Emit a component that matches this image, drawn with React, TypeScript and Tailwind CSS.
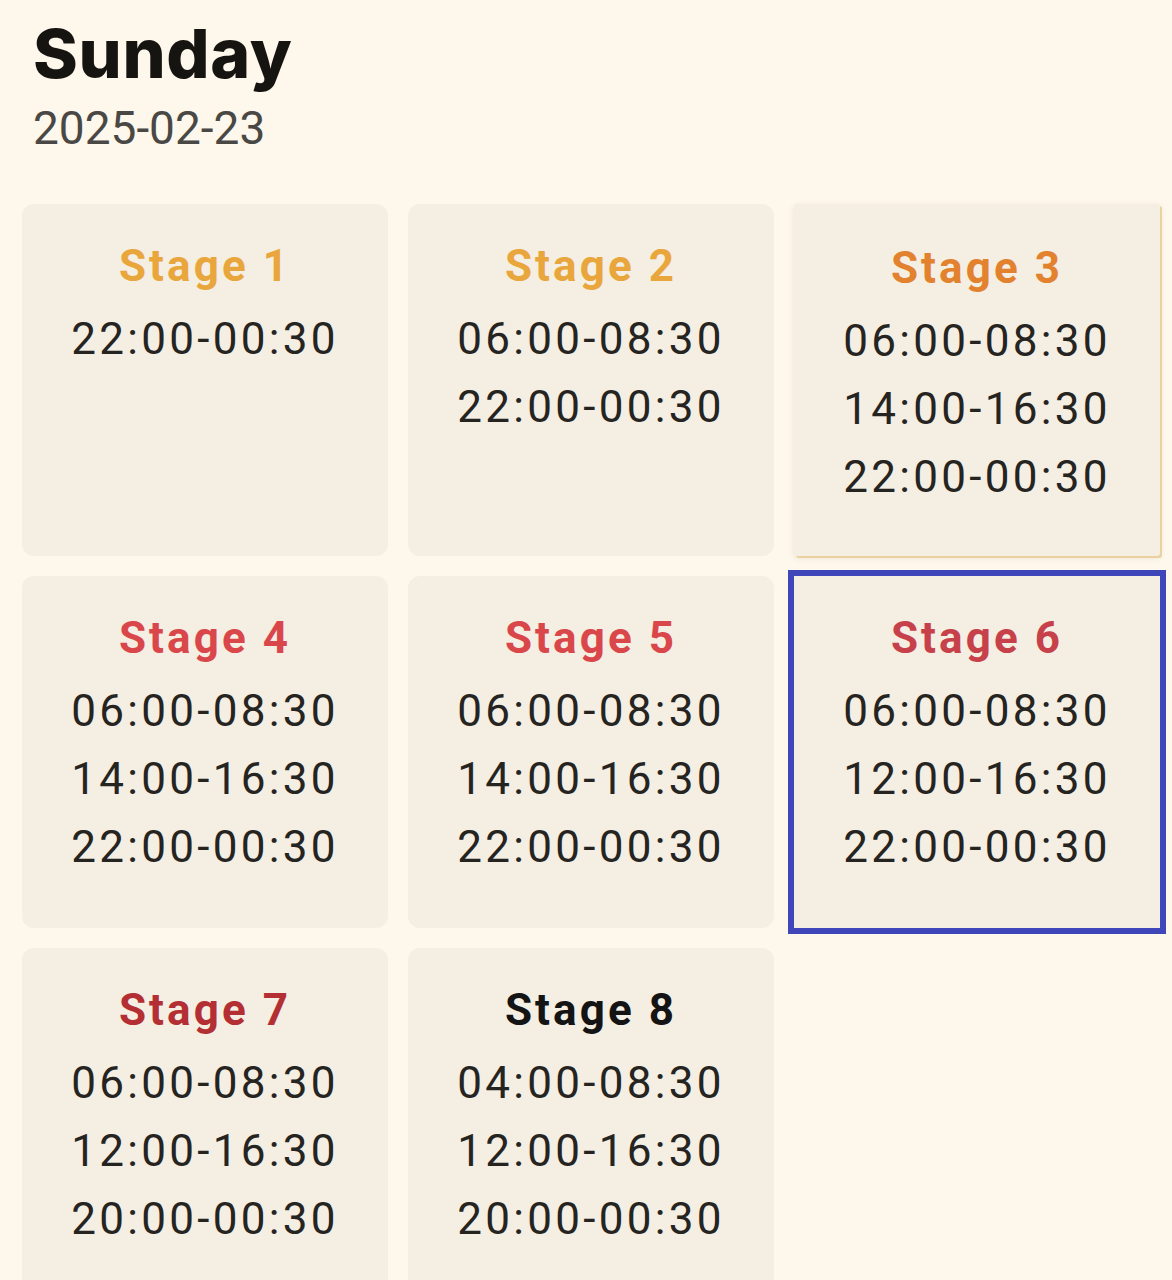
type Stage = { n: number; color: string; times: string[]; variant?: 'raised' | 'selected' };

const STAGES: Stage[] = [
  { n: 1, color: 'text-[#e9a63c]', times: ['22:00-00:30'] },
  { n: 2, color: 'text-[#e9a63c]', times: ['06:00-08:30', '22:00-00:30'] },
  { n: 3, color: 'text-[#e2822f]', times: ['06:00-08:30', '14:00-16:30', '22:00-00:30'], variant: 'raised' },
  { n: 4, color: 'text-[#d9474b]', times: ['06:00-08:30', '14:00-16:30', '22:00-00:30'] },
  { n: 5, color: 'text-[#d9474b]', times: ['06:00-08:30', '14:00-16:30', '22:00-00:30'] },
  { n: 6, color: 'text-[#c7414a]', times: ['06:00-08:30', '12:00-16:30', '22:00-00:30'], variant: 'selected' },
  { n: 7, color: 'text-[#b32f33]', times: ['06:00-08:30', '12:00-16:30', '20:00-00:30'] },
  { n: 8, color: 'text-[#141414]', times: ['04:00-08:30', '12:00-16:30', '20:00-00:30'] },
];

function StageCard({ s }: { s: Stage }) {
  const box =
    s.variant === 'selected'
      ? 'outline-[6px] outline-solid outline-[#3e46b9]'
      : s.variant === 'raised'
        ? 'rounded-[3px] pt-[30px] shadow-[2px_2px_0_#e9d2a0,0_2px_6px_rgba(120,90,30,0.12)]'
        : 'rounded-xl';
  return (
    <div className={`h-[352px] bg-[#f4eee3] pt-[28px] text-center ${box}`}>
      <p className={`mb-[5px] text-[44px] font-bold leading-[68px] tracking-[0.07em] ${s.color}`}>Stage {s.n}</p>
      {s.times.map(t => (
        <p key={t} className="text-[44px] leading-[68px] tracking-[0.075em] text-[#262421]">{t}</p>
      ))}
    </div>
  );
}

export default function App() {
  return (
    <div className="h-[1280px] overflow-hidden bg-[#fdf7ec] font-['Roboto',sans-serif]">
      <div className="pl-[33px] pt-[20px]">
        <h1 className="font-['Inter',sans-serif] text-[68px] font-extrabold leading-[66px] tracking-[0.01em] text-[#161410]">Sunday</h1>
        <p className="mt-[15px] text-[46px] leading-[55px] text-[#4a4844]">2025-02-23</p>
      </div>

      <div className="mt-[48px] grid grid-cols-3 gap-[20px] pl-[22px] pr-[12px]">
        {STAGES.map(s => <StageCard key={s.n} s={s} />)}
      </div>
    </div>
  );
}
